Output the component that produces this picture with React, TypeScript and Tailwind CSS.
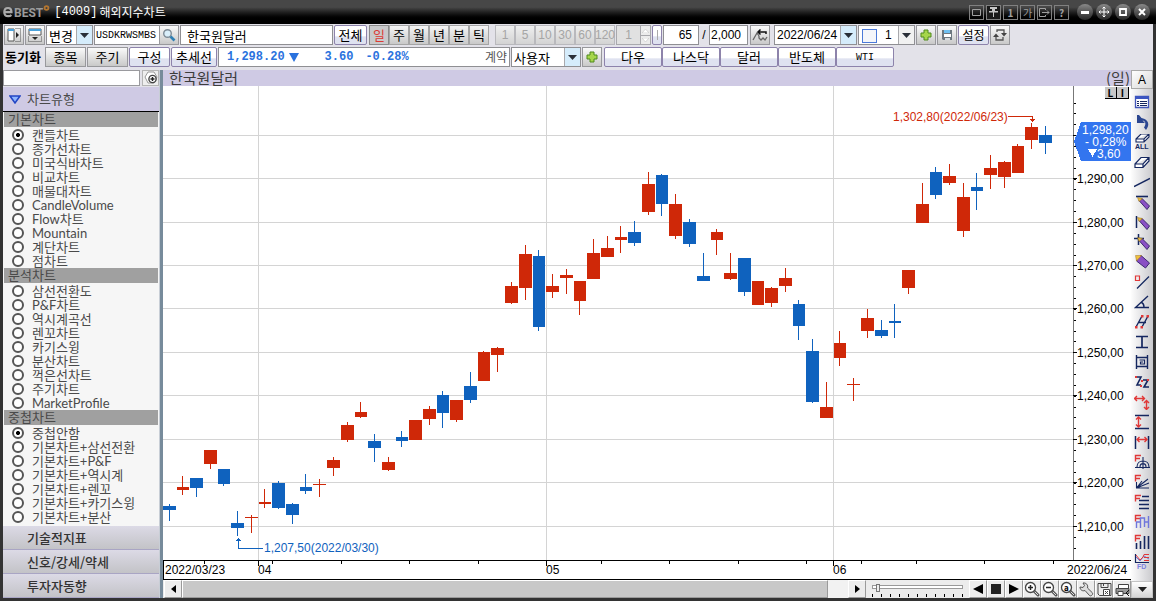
import { useState, type ReactNode } from 'react';
import clsx from 'clsx';

const RED = '#cf2808';
const BLUE = '#0f62be';

// [left, width, wick x, high, low, body top, body bottom, up]
type Candle = [number, number, number, number, number, number, number, 0 | 1];

const candles: Candle[] = [
    [163, 13, 169, 504, 521, 506, 510, 0],
    [177, 12, 182, 476, 495, 487, 490, 1],
    [190, 13, 196, 478, 497, 478, 488, 0],
    [204, 13, 210, 450, 469, 450, 464, 1],
    [218, 12, 223, 469, 486, 469, 484, 0],
    [231, 13, 237, 511, 536, 523, 528, 0],
    [245, 13, 251, 515, 533, 517, 518, 1],
    [259, 12, 264, 489, 508, 502, 504, 1],
    [272, 13, 278, 481, 509, 483, 508, 0],
    [286, 13, 292, 503, 524, 504, 515, 0],
    [300, 12, 305, 474, 494, 487, 491, 0],
    [313, 13, 319, 479, 497, 484, 485, 1],
    [327, 13, 333, 457, 476, 460, 468, 1],
    [341, 13, 347, 422, 442, 425, 440, 1],
    [355, 12, 360, 402, 418, 412, 417, 1],
    [368, 13, 374, 434, 462, 441, 448, 0],
    [382, 13, 388, 457, 471, 462, 470, 1],
    [396, 12, 401, 431, 447, 437, 441, 0],
    [409, 13, 415, 420, 440, 420, 440, 1],
    [423, 13, 429, 406, 425, 409, 419, 1],
    [437, 12, 442, 391, 428, 395, 413, 0],
    [450, 13, 456, 400, 422, 400, 420, 1],
    [464, 13, 470, 372, 403, 386, 400, 0],
    [478, 12, 483, 351, 381, 352, 381, 1],
    [491, 13, 497, 347, 372, 348, 355, 1],
    [505, 13, 511, 282, 304, 286, 303, 1],
    [519, 13, 525, 245, 300, 254, 288, 1],
    [533, 12, 538, 250, 331, 256, 327, 0],
    [546, 13, 552, 274, 298, 286, 292, 1],
    [560, 13, 566, 269, 294, 275, 278, 1],
    [574, 12, 579, 281, 315, 281, 301, 1],
    [587, 13, 593, 239, 279, 253, 279, 1],
    [601, 13, 607, 236, 257, 248, 257, 1],
    [615, 12, 620, 226, 253, 237, 240, 1],
    [628, 13, 634, 221, 246, 232, 243, 0],
    [642, 13, 648, 172, 215, 184, 212, 1],
    [656, 12, 661, 174, 216, 175, 204, 0],
    [669, 13, 675, 194, 239, 204, 236, 1],
    [683, 13, 689, 219, 247, 222, 244, 0],
    [697, 13, 703, 253, 281, 276, 281, 0],
    [711, 12, 716, 229, 255, 232, 240, 1],
    [724, 13, 730, 253, 280, 273, 279, 1],
    [738, 13, 744, 258, 296, 258, 292, 0],
    [752, 12, 757, 281, 305, 281, 305, 1],
    [765, 13, 771, 287, 307, 288, 303, 1],
    [779, 13, 785, 268, 292, 278, 286, 1],
    [793, 12, 798, 300, 340, 304, 326, 0],
    [806, 13, 812, 339, 403, 351, 402, 0],
    [820, 13, 826, 382, 418, 407, 418, 1],
    [834, 12, 839, 331, 366, 343, 358, 1],
    [847, 13, 853, 378, 401, 384, 385, 1],
    [861, 13, 867, 309, 338, 318, 331, 1],
    [875, 13, 881, 320, 338, 330, 336, 0],
    [889, 12, 894, 304, 338, 321, 323, 0],
    [902, 13, 908, 270, 294, 270, 288, 1],
    [916, 13, 922, 183, 223, 204, 223, 1],
    [930, 12, 935, 167, 199, 172, 195, 0],
    [943, 13, 949, 164, 185, 176, 183, 1],
    [957, 13, 963, 183, 237, 197, 231, 1],
    [971, 12, 976, 173, 210, 187, 191, 0],
    [984, 13, 990, 155, 189, 168, 175, 1],
    [998, 13, 1004, 161, 188, 162, 177, 1],
    [1012, 12, 1017, 144, 173, 146, 173, 1],
    [1025, 13, 1031, 123, 149, 127, 140, 1],
    [1039, 13, 1045, 126, 154, 135, 143, 0],
];

const priceLines: [number, string][] = [
    [135, ''],
    [178, '1,290,00'],
    [222, '1,280,00'],
    [265, '1,270,00'],
    [308, '1,260,00'],
    [352, '1,250,00'],
    [395, '1,240,00'],
    [439, '1,230,00'],
    [482, '1,220,00'],
    [526, '1,210,00'],
];

const minorTicks = Array.from({ length: 42 }, (_, i) => Math.round(102.5 + i * 10.86));
const weekTicks = [204, 272, 341, 409, 478, 601, 669, 738, 806, 861, 916, 984, 1053];

const chartGroups = [
    {
        title: '기본차트',
        name: 'basic',
        items: ['캔들차트', '종가선차트', '미국식바차트', '비교차트', '매물대차트', 'CandleVolume', 'Flow차트', 'Mountain', '계단차트', '점차트'],
        selected: '캔들차트',
    },
    {
        title: '분석차트',
        name: 'analysis',
        items: ['삼선전환도', 'P&F차트', '역시계곡선', '렌꼬차트', '카기스윙', '분산차트', '꺽은선차트', '주기차트', 'MarketProfile'],
        selected: '',
    },
    {
        title: '중첩차트',
        name: 'overlay',
        items: ['중첩안함', '기본차트+삼선전환', '기본차트+P&F', '기본차트+역시계', '기본차트+렌꼬', '기본차트+카기스윙', '기본차트+분산'],
        selected: '중첩안함',
    },
];

const box = 'h-5 shrink-0 border border-[#8f8f93] bg-white';
const grayBtn = 'flex h-5 shrink-0 items-center justify-center border border-[#98989c] bg-linear-to-b from-[#fafafa] to-[#c9c9c9] whitespace-nowrap';
const violetBtn = 'flex h-5 shrink-0 items-center justify-center rounded-xs border border-[#8d83ab] bg-linear-to-b from-white from-55% to-[#dfe2f0] to-60% whitespace-nowrap';

function Combo({ label, value, className, blue = true, pad = 'pl-0.5' }: { label: string; value: string; className: string; blue?: boolean; pad?: string }) {
    return (
        <div className={clsx('relative', box, className)}>
            <select aria-label={label} className={clsx('block h-full w-full appearance-none bg-transparent outline-none', pad)}>
                <option>{value}</option>
            </select>
            <span className={clsx('pointer-events-none absolute inset-y-0 right-0 flex w-4 items-center justify-center border-l border-[#a9a9ad]', blue ? 'bg-[#d5ecfb]' : 'bg-[#f1f1f1]')}>
                <svg width="9" height="5" viewBox="0 0 9 5"><path d="M0 0h9L4.500 5z" fill="#2a2f38" /></svg>
            </span>
        </div>
    );
}

function PlusIcon() {
    return (
        <svg width="12" height="12" viewBox="0 0 12 12">
            <path d="M4 1h4v3h3v4H8v3H4V8H1V4h3z" fill="#a6d64a" stroke="#4f8a1c" />
        </svg>
    );
}

function TitleBar() {
    const small = 'flex size-[15px] items-center justify-center border border-[#808080] text-[#a0a0a0]';
    const round = 'flex size-4 items-center justify-center rounded-full bg-linear-to-b from-[#8a8a8a] to-[#262626] text-white';
    return (
        <header className="flex h-6 shrink-0 items-center bg-linear-to-b from-[#474747] from-30% to-black to-85% pr-1.5 pl-0.5">
            <div className="flex items-center font-['Roboto',sans-serif] leading-none font-bold text-[#9b9b9b]">
                <svg width="12" height="12" viewBox="0 0 11 12" fill="none" stroke="#aaa" strokeWidth="2.200">
                    <path d="M2 6.200h7C9 3.400 7.500 2 5.500 2 3.300 2 1.800 3.800 1.800 6.200s1.600 4 3.900 4c1.400 0 2.400-.4 3.200-1.200" />
                </svg>
                <span className="pt-0.5 text-xs">BEST</span>
                <svg className="mb-2" width="7" height="8" viewBox="0 0 8 8"><circle cx="4" cy="4" r="2.200" fill="none" stroke="#b5762f" strokeWidth="2" /></svg>
            </div>
            <h1 className="ml-1 flex items-center gap-0.5 text-xs text-white">
                <span className="font-['Liberation_Mono',monospace]">[4009]</span>
                <span>해외지수차트</span>
            </h1>
            <div className="ml-auto flex gap-0.5">
                <button aria-label="창" className={small}><svg width="9" height="9" viewBox="0 0 9 9"><path d="M.5 1.500h8v6h-8z" fill="none" stroke="currentColor" /></svg></button>
                <button aria-label="고정" className={clsx(small, 'bg-[#1a1a1a] text-[#c4c4c4]')}><svg width="9" height="10" viewBox="0 0 9 10"><path d="M1 0h7v2H6v2h3v1.500H5V10H4V5.500H0V4h3V2H1z" fill="currentColor" /></svg></button>
                <button className={clsx(small, 'text-[10px] font-bold')}>1</button>
                <button className={clsx(small, 'text-[10px]')}>가</button>
                <button aria-label="내보내기" className={small}><svg width="11" height="9" viewBox="0 0 11 9" fill="none" stroke="currentColor"><path d="M6.500 2V.5h-6v8h6V7M3 4.500h7M8 2.500l2 2-2 2" /></svg></button>
                <button className={clsx(small, 'text-[10px] font-bold')}>?</button>
            </div>
            <div className="ml-2 flex gap-[3px]">
                <button aria-label="최소화" className={round}><svg width="8" height="8" viewBox="0 0 8 8"><path d="M0 3h8v3H0z" fill="#fff" /></svg></button>
                <button aria-label="이동" className={round}><svg width="12" height="12" viewBox="0 0 12 12" fill="none" stroke="#fff"><path d="M6 1v10M1 6h10M4.500 2.500L6 1l1.500 1.500M4.500 9.500L6 11l1.500-1.500M2.500 4.500L1 6l1.500 1.500M9.500 4.500L11 6 9.500 7.500" /></svg></button>
                <button aria-label="최대화" className={round}><svg width="8" height="8" viewBox="0 0 8 8"><path d="M1 1h6v6H1z" fill="none" stroke="#fff" strokeWidth="1.800" /></svg></button>
                <button aria-label="닫기" className={round}><svg width="8" height="8" viewBox="0 0 8 8"><path d="M1 1l6 6M7 1L1 7" stroke="#fff" strokeWidth="2" /></svg></button>
            </div>
        </header>
    );
}

function PeriodButtons() {
    const [period, setPeriod] = useState('일');
    return (
        <div className="ml-px flex shrink-0">
            {['일', '주', '월', '년', '분', '틱'].map((p) => (
                <button
                    key={p}
                    onClick={() => setPeriod(p)}
                    className={clsx(
                        'flex h-5 w-5 items-center justify-center border text-[13px]',
                        p === period ? 'border-[#8a8a8a] bg-[#c9c9cb] text-[#dc3a34]' : 'border-[#a5a5a5] bg-linear-to-b from-[#f5f5f5] to-[#c9c9c9]',
                    )}
                >
                    {p}
                </button>
            ))}
        </div>
    );
}

function TopToolbar() {
    const num = "font-['Liberation_Sans','Noto_Sans_CJK_KR',sans-serif] text-xs";
    return (
        <div className="flex h-5 gap-px text-[13px]">
            <button aria-label="왼쪽 패널" className={clsx(grayBtn, 'w-5')}>
                <svg width="14" height="14" viewBox="0 0 14 14"><path d="M1 1h6v12H1z" fill="#fff" stroke="#555" /><path d="M1 1h6v2H1z" fill="#4aa3dc" /><path d="M8.500.5h5v13h-5" fill="none" stroke="#555" strokeDasharray="1 1" /><path d="M9 4l3 3-3 3z" fill="#222" /></svg>
            </button>
            <button aria-label="아래 패널" className={clsx(grayBtn, 'w-5')}>
                <svg width="14" height="14" viewBox="0 0 14 14"><path d="M1 1h12v6H1z" fill="#fff" stroke="#555" /><path d="M1 1h12v2H1z" fill="#4aa3dc" /><path d="M.5 8.500v5h13v-5" fill="none" stroke="#555" strokeDasharray="1 1" /><path d="M4 9h6l-3 3z" fill="#222" /></svg>
            </button>
            <Combo label="변경" value="변경" className="w-[47px]" />
            <div className="flex shrink-0">
                <input aria-label="종목코드" defaultValue="USDKRWSMBS" className={clsx(box, "w-[66px] px-px font-['Liberation_Mono',monospace] text-[10px] outline-none")} />
                <button aria-label="검색" className={clsx(grayBtn, '-ml-px w-5')}>
                    <svg width="14" height="14" viewBox="0 0 14 14"><circle cx="5.500" cy="5.500" r="3.800" fill="#d9eefa" stroke="#7e8b96" strokeWidth="1.400" /><path d="M8.500 8.500L12.500 12.500" stroke="#2f7fb4" strokeWidth="2.600" /></svg>
                </button>
            </div>
            <input aria-label="종목명" defaultValue="한국원달러" className={clsx(box, 'w-[153px] px-1.5 outline-none')} />
            <button className={clsx(violetBtn, 'w-[33px]')}>전체</button>
            <PeriodButtons />
            <div className="ml-[5px] flex shrink-0">
                {['1', '5', '10', '30', '60', '120'].map((n) => (
                    <button key={n} disabled className={clsx('flex h-5 w-5 items-center justify-center border border-[#b9b9bd] bg-linear-to-b from-[#efefef] to-[#d3d3d3] text-[#a5a5a5]', num)}>{n}</button>
                ))}
            </div>
            <div className={clsx('flex w-[35px] shrink-0 border border-[#a9a9ad] bg-[#e1e1e1]', num)}>
                <input aria-label="분 간격" defaultValue="1" disabled className="w-6 border-r border-[#a9a9ad] text-center text-[#a5a5a5]" />
                <span className="flex flex-1 flex-col items-center justify-center gap-0.5 bg-[#ececec]">
                    <svg width="7" height="4" viewBox="0 0 7 4"><path d="M0 4h7L3.500 0z" fill="#fff" stroke="#bbb" strokeWidth=".5" /></svg>
                    <span className="h-px w-full bg-[#a9a9ad]" />
                    <svg width="7" height="4" viewBox="0 0 7 4"><path d="M0 0h7L3.500 4z" fill="#fff" stroke="#bbb" strokeWidth=".5" /></svg>
                </span>
            </div>
            <button className={clsx(violetBtn, 'w-2.5')} aria-label="간격">
                <span className="h-2.5 w-px bg-[#aaa]" />
            </button>
            <input aria-label="봉 개수" defaultValue="65" className={clsx(box, 'w-9 px-1.5 text-right outline-none', num)} />
            <span className={clsx('w-2 text-center leading-5', num)}>/</span>
            <input aria-label="전체 개수" defaultValue="2,000" className={clsx(box, 'w-[39px] px-px outline-none', num)} />
            <button aria-label="되돌리기" className={clsx(grayBtn, 'ml-px w-5')}>
                <svg width="16" height="14" viewBox="0 0 16 14" fill="none"><path d="M1 12l4-7 2 3" stroke="#666" strokeWidth="1.300" /><path d="M6 4h8v2M8.500 1.500L6 4l2.500 2.500" stroke="#111" strokeWidth="1.500" /><path d="M7 8v2l2 2 2-2 2 2 2-3" stroke="#666" strokeWidth="1.300" /></svg>
            </button>
            <Combo label="날짜" value="2022/06/24" className={clsx('ml-[3px] w-[83px]', num)} />
            <div className="relative flex shrink-0">
                <Combo label="선 굵기" value="1" blue={false} pad="pl-[26px]" className={clsx('w-[57px]', num)} />
                <span className="pointer-events-none absolute top-1 left-1 h-3.5 w-[15px] border border-[#4c7ad8] bg-[#f4f6fa]" />
            </div>
            <button aria-label="추가" className={clsx(grayBtn, 'w-5')}><PlusIcon /></button>
            <button aria-label="저장" className={clsx(grayBtn, 'w-5')}>
                <svg width="12" height="12" viewBox="0 0 12 12"><path d="M1 1h10v10H2L1 10z" fill="#6d7880" /><path d="M3 1h6v3H3z" fill="#6fc0f0" /><path d="M3 5h7v3H3z" fill="#fff" /><path d="M4 9h5v2H4z" fill="#d8dde0" /></svg>
            </button>
            <button className={clsx(violetBtn, 'w-[31px] text-xs')}>설정</button>
            <button aria-label="새로고침" className={clsx(grayBtn, 'w-5')}>
                <svg width="14" height="14" viewBox="0 0 14 14" fill="none" stroke="#555" strokeWidth="1.300"><path d="M4 4V2h7v3M10 9v3H3V9" /><path d="M8 5h6l-3 3.500zM0 9h6L3 5.500z" fill="#444" stroke="none" /></svg>
            </button>
        </div>
    );
}

function QuoteToolbar() {
    const quote = "font-['Liberation_Mono',monospace] text-xs font-bold text-[#2a72de]";
    return (
        <div className="flex h-5 gap-px text-[13px]">
            <strong className="w-10 shrink-0 pl-px text-[13px] leading-5 whitespace-nowrap">동기화</strong>
            <button className={clsx(grayBtn, 'w-[41px]')}>종목</button>
            <button className={clsx(grayBtn, 'w-[41px]')}>주기</button>
            <button className={clsx(violetBtn, 'w-[41px]')}>구성</button>
            <button className={clsx(violetBtn, 'w-[46px]')}>추세선</button>
            <div className={clsx(box, 'flex w-[292px] items-center pr-0.5 pl-2', quote)}>
                <span>1,298.20</span>
                <svg className="ml-1" width="10" height="9" viewBox="0 0 10 9"><path d="M0 0h10L5 9z" fill="#2a72de" /></svg>
                <span className="ml-[26px]">3.60</span>
                <span className="ml-3">-0.28%</span>
                <span className="ml-auto font-['Noto_Sans_CJK_KR',sans-serif] font-normal text-[#555]">계약</span>
            </div>
            <Combo label="사용자" value="사용자" className="w-[70px]" />
            <button aria-label="추가" className={clsx(grayBtn, 'w-5')}><PlusIcon /></button>
            <div className="ml-px flex">
                {['다우', '나스닥', '달러', '반도체', 'WTI'].map((name) => (
                    <button key={name} className={clsx(violetBtn, 'w-[58px]', name === 'WTI' && "font-['Liberation_Mono',monospace] text-[10px]")}>{name}</button>
                ))}
            </div>
        </div>
    );
}

function Sidebar() {
    return (
        <aside className="flex w-[156px] shrink-0 flex-col overflow-hidden bg-[#f6f6f6] text-[#4a4a4a]">
            <div className="flex h-[17px] shrink-0 justify-between bg-[#e3e2e9] pb-px">
                <input aria-label="차트 검색" className="w-[137px] border border-[#9a9a9e] bg-white outline-none" />
                <button aria-label="검색 설정" className="flex w-[17px] items-center justify-center border border-[#b5b5b5] bg-[#eee]">
                    <svg width="14" height="14" viewBox="0 0 14 14"><path d="M4 1h6l3 5-3 6H4L1 6z" fill="#fff" stroke="#999" /><circle cx="8.500" cy="8" r="3.600" fill="#fff" stroke="#444" strokeWidth="1.400" /><path d="M6.500 8h4M8.500 6v4" stroke="#222" strokeWidth="1.400" /></svg>
                </button>
            </div>
            <button className="flex h-[25px] shrink-0 items-center gap-1.5 border-b border-black bg-[#cfcae4] pl-1.5 text-[13px]">
                <svg width="12" height="9" viewBox="0 0 12 9"><path d="M1 1h10L6 8z" fill="#8fb6ff" stroke="#2346c4" strokeWidth="1.500" /></svg>
                차트유형
            </button>
            <div className="min-h-0 flex-1 px-px font-['Lato','Noto_Sans_CJK_KR',sans-serif]">
                {chartGroups.map((group) => (
                    <fieldset key={group.name} className="text-[13px]">
                        <legend className="mb-px h-[15px] w-full bg-[#a0a0a0] pl-1 leading-[15px]">{group.title}</legend>
                        {group.items.map((item) => (
                            <label key={item} className="flex h-3.5 items-center gap-2 pl-2 leading-3.5 whitespace-nowrap">
                                <input
                                    type="radio"
                                    name={group.name}
                                    defaultChecked={item === group.selected}
                                    className="size-3 shrink-0 appearance-none rounded-full border-2 border-[#555] bg-white checked:bg-radial checked:from-black checked:from-30% checked:to-white checked:to-40%"
                                />
                                {item}
                            </label>
                        ))}
                    </fieldset>
                ))}
            </div>
            <nav className="shrink-0">
                {['기술적지표', '신호/강세/약세', '투자자동향'].map((name) => (
                    <button key={name} className="block h-6 w-full border-b border-[#a9a5c4] bg-linear-to-b from-[#dcdae6] to-[#c3c3c7] pl-6 text-left text-[13px] leading-5 font-medium text-[#333]">{name}</button>
                ))}
            </nav>
        </aside>
    );
}

function CandleChart() {
    return (
        <svg className="block h-full w-full font-['Liberation_Sans',sans-serif]" viewBox="163 86 968 494" preserveAspectRatio="xMinYMin meet" fontSize="12" shapeRendering="crispEdges">
            <rect x="163" y="86" width="968" height="494" fill="#fff" />
            {priceLines.map(([y]) => <rect key={y} x="163" y={y} width="910" height="1" fill="#d4d4d4" />)}
            {[258, 546, 833].map((x) => <rect key={x} x={x} y="86" width="1" height="474" fill="#d4d4d4" />)}
            <rect x="1073" y="86" width="1" height="474" fill="#777" />
            {minorTicks.map((y) => <rect key={y} x="1074" y={y} width="2" height="1" fill="#000" />)}
            {priceLines.map(([y, label]) => (
                <g key={y}>
                    <rect x="1073" y={y} width="4" height="1" fill="#000" />
                    <text x="1077" y={y + 5} fill="#000">{label}</text>
                </g>
            ))}
            {candles.map(([x, w, wick, high, low, top, bottom, up]) => (
                <g key={x} fill={up ? RED : BLUE}>
                    <rect x={wick} y={high} width="1" height={low - high} />
                    <rect x={x} y={top} width={w} height={bottom - top} />
                </g>
            ))}
            {/* high / low markers */}
            <text x="893" y="121" fill={RED}>1,302,80(2022/06/23)</text>
            <path d="M1008 116.500h24.500v5" fill="none" stroke={RED} />
            <path d="M1030 119h5v1h-1v1h-1v1h-1v-1h-1v-1h-1z" fill={RED} />
            <text x="264" y="552" fill={BLUE}>1,207,50(2022/03/30)</text>
            <path d="M263 548.500h-24.500v-9" fill="none" stroke={BLUE} />
            <path d="M236 541h5v-1h-1v-1h-1v-1h-1v1h-1v1h-1z" fill={BLUE} />
            {/* last price */}
            <path d="M1081 122h50v39h-50l-7-19.500z" fill="#3375ef" />
            <g fill="#fff">
                <text x="1082" y="134">1,298,20</text>
                <text x="1085" y="146">- 0,28%</text>
                <path d="M1088 149h9l-4.500 8z" />
                <text x="1097" y="158">3,60</text>
            </g>
            {/* date axis */}
            <rect x="163" y="560" width="968" height="1" fill="#000" />
            <rect x="163" y="579" width="968" height="1" fill="#000" />
            <rect x="163" y="560" width="1" height="20" fill="#000" />
            {weekTicks.map((x) => <rect key={x} x={x} y="561" width="1" height="3" fill="#000" />)}
            {[258, 546, 833].map((x, i) => (
                <g key={x}>
                    <rect x={x} y="561" width="1" height="5" fill="#000" />
                    <text x={x} y="574">{['04', '05', '06'][i]}</text>
                </g>
            ))}
            <text x="165" y="574">2022/03/23</text>
            <text x="1067" y="574">2022/06/24</text>
        </svg>
    );
}

const ctl = 'flex w-[18px] shrink-0 items-center justify-center border border-[#9a9a9a] border-t-white border-l-white bg-[#ececec]';

function Lens({ children }: { children: ReactNode }) {
    return (
        <svg width="16" height="16" viewBox="0 0 16 16">
            <path d="M10 10l4 4" stroke="#555" strokeWidth="3" strokeLinecap="round" />
            <path d="M10.500 10.500l3.500 3.500" stroke="#ddd" strokeWidth="1" />
            <circle cx="6.500" cy="6.500" r="5" fill="#fff" stroke="#444" strokeWidth="1.300" />
            {children}
        </svg>
    );
}

function BottomBar() {
    return (
        <div className="flex h-[18px] shrink-0 bg-[#ececec]">
            <button aria-label="이전" className={clsx(ctl, 'ml-px')}><svg width="5" height="8" viewBox="0 0 5 8"><path d="M5 0v8L0 4z" /></svg></button>
            <div className="flex flex-1 bg-[#f2f2f2]">
                <div className="w-[97%] border border-[#9a9a9a] border-t-white border-l-white bg-[#c8c8c8]" />
            </div>
            <button aria-label="다음" className={ctl}><svg width="5" height="8" viewBox="0 0 5 8"><path d="M0 0v8l5-4z" /></svg></button>
            <div className="flex w-[103px] shrink-0 flex-col px-1.5 pt-0.5">
                <input
                    type="range"
                    aria-label="확대 비율"
                    min="0"
                    max="100"
                    defaultValue="4"
                    className="block h-2.5 w-full appearance-none bg-transparent [&::-webkit-slider-runnable-track]:h-1 [&::-webkit-slider-runnable-track]:border [&::-webkit-slider-runnable-track]:border-[#999] [&::-webkit-slider-runnable-track]:bg-white [&::-webkit-slider-thumb]:-mt-0.5 [&::-webkit-slider-thumb]:h-2 [&::-webkit-slider-thumb]:w-1 [&::-webkit-slider-thumb]:appearance-none [&::-webkit-slider-thumb]:border [&::-webkit-slider-thumb]:border-[#777] [&::-webkit-slider-thumb]:bg-[#eee]"
                />
                <svg className="mt-0.5 w-full" height="3" viewBox="0 0 91 3" shapeRendering="crispEdges">
                    {Array.from({ length: 11 }, (_, i) => <rect key={i} x={i * 9} y="0" width="1" height="3" />)}
                </svg>
            </div>
            <button aria-label="뒤로" className={ctl}><svg width="10" height="10" viewBox="0 0 10 10"><path d="M10 0v10L0 5z" /></svg></button>
            <button aria-label="정지" className={ctl}><svg width="10" height="10" viewBox="0 0 10 10"><path d="M0 0h10v10H0z" fill="#222" /></svg></button>
            <button aria-label="앞으로" className={ctl}><svg width="10" height="10" viewBox="0 0 10 10"><path d="M0 0v10l10-5z" /></svg></button>
            <button aria-label="확대" className={ctl}><Lens><path d="M4 6.500h5M6.500 4v5" stroke="#222" strokeWidth="1.500" /></Lens></button>
            <button aria-label="축소" className={ctl}><Lens><path d="M4 6.500h5" stroke="#222" strokeWidth="1.500" /></Lens></button>
            <button aria-label="전체보기" className={ctl}><Lens><text x="4" y="9.500" fontSize="8" fontWeight="bold">a</text></Lens></button>
            <button aria-label="도구" className={ctl}>
                <svg width="15" height="15" viewBox="0 0 15 15"><path d="M4 1l1.500 2.500L4 5.500 1 5C1 8 3.500 9.500 6 8.500l4.500 5c1.500 1.200 4-1 2.800-2.800L8.500 6C9.500 3 7 .5 4 1z" fill="#ddd" stroke="#555" /></svg>
            </button>
            <button aria-label="저장" className={ctl}>
                <svg width="15" height="15" viewBox="0 0 15 15" fill="none" stroke="#444"><path d="M1 1.500h13v12H2.500L1 12zM4 1.500v4h7v-4M6.500 2v2" /><path d="M6.500 7.500h6v6h-6z" fill="#fff" /><path d="M8 9l3 3M11 9l-3 3" /></svg>
            </button>
            <button aria-label="인쇄" className={ctl}>
                <svg width="15" height="15" viewBox="0 0 15 15" fill="none" stroke="#444"><path d="M3.500 6V2.500h10V6" fill="#fff" /><path d="M1 6.500h13v5H1z" fill="#999" /><path d="M3 9.500h5v4H3z" fill="#fff" /><path d="M14 8l-3 3 3 3" stroke="#111" /></svg>
            </button>
        </div>
    );
}

const N = '#14265f';
const R = '#e03838';

function Pencil() {
    return (
        <>
            <path d="M5 6.500L8 4.500l7.500 7.500-2.500 3.500z" fill="#8a4fc4" stroke="#3c2a70" />
            <path d="M3.500 3.500l5 1L5 7.500z" fill="#f0c040" stroke="#8a6a20" strokeWidth=".5" />
        </>
    );
}

function Eraser() {
    return <path d="M1 10l6-6.500h8v3.500l-6 6.500H1zM1 10h8l6-6.500M9 10v3.500" fill="#fff" stroke={N} strokeWidth="1.200" />;
}

const F = <path d="M1.500 7.500V1.500H7M1.500 4.500H6" stroke={R} strokeWidth="1.400" />;

const drawingTools: [string, ReactNode][] = [
    ['목록', <><path d="M1.500 2.500h13v11h-13z" fill="#fff" stroke="#4256b8" strokeWidth="1.300" /><path d="M1 2h14v3H1z" fill="#3c55c0" /><path d="M3 7.500h2M3 9.500h2M3 11.500h2M6 7.500h7M6 9.500h7M6 11.500h7" stroke={N} /></>],
    ['실행취소', <path d="M3 1v8h8L8.500 6.500c3 .5 4 3.500 1.500 7l2 2.500c4-5 3-10.500-4.500-12L5 1z" fill="#2b4690" />],
    ['전체 지우기', <><path d="M2 5l5-5h8v3L10 8H2zM2 5h8l5-5M10 5v3" fill="#fff" stroke={N} strokeWidth="1.100" /><text x="1" y="15" fontSize="7" fontWeight="bold" stroke="none" fill={N}>ALL</text></>],
    ['지우기', <Eraser />],
    ['추세선', <path d="M0 12.500L16 4.500" stroke={N} strokeWidth="1.400" />],
    ['수평선', <><path d="M2 2.500h12" stroke={N} strokeWidth="1.600" /><Pencil /></>],
    ['수직선', <><path d="M2.500 2v12" stroke={N} strokeWidth="1.500" /><Pencil /></>],
    ['십자선', <><path d="M0 4.500h10M4.500 0v11" stroke={N} strokeWidth="1.500" /><Pencil /></>],
    ['연필', <><path d="M4 3.500L7 1.500l8.500 7.500L11.500 14 2.500 7z" fill="#8a4fc4" stroke="#3c2a70" /><path d="M1.500 1.500h6L2.500 7z" fill="#f0c040" stroke="#a07820" strokeWidth=".5" /></>],
    ['직선', <><path d="M3 14.500L15 2.500" stroke={N} strokeWidth="1.300" /><path d="M1.500 2h4v4.500h-4z" stroke={R} strokeWidth="1.200" /></>],
    ['각도선', <path d="M14 2L1.500 13.500H15M7 8c2 1 3 3 3 5" stroke={N} strokeWidth="1.400" />],
    ['평행선', <><path d="M2 13L8 2M8 13l6-11M4 8.500h8" stroke={N} strokeWidth="1.400" /><path d="M1 12h2.500v2.500H1zM6.500 12H9v2.500H6.500zM7 1h2.500v2.500H7zM12.500 1H15v2.500h-2.500z" fill={R} /></>],
    ['구간선', <path d="M2 2.500h12M2 13.500h12M8 3v10" stroke={N} strokeWidth="1.700" />],
    ['사각형', <><path d="M2.500 1v14M13.500 1v14M2.500 3.500h11M2.500 12.500h11" stroke={N} strokeWidth="1.400" /><path d="M5.500 6h5v4h-4V8H9" stroke={N} strokeWidth="1.200" /></>],
    ['지그재그', <><path d="M2 3h5l-4 8h4M9 6h5l-4 7h5" stroke={N} strokeWidth="1.600" /><path d="M1 2h2v2H1zM7 6h2v2H7zM6 11h2v2H6zM13 5h2v2h-2z" fill={R} /></>],
    ['가로세로', <path d="M1 4.500h9M3 2L.5 4.500 3 7M8 2l2.500 2.500L8 7M12.500 7v8M10 9l2.500-2.500L15 9M10 13l2.500 2.500L15 13" stroke={R} strokeWidth="1.400" />],
    ['세로범위', <><path d="M1 1.500h14M1 14.500h14" stroke={N} strokeWidth="1.500" /><path d="M4.500 3v10M2 5.500L4.500 3 7 5.500M2 10.500L4.500 13 7 10.500" stroke={R} strokeWidth="1.400" /></>],
    ['가로범위', <><path d="M1.500 2v13M14.500 2v13" stroke={N} strokeWidth="1.500" /><path d="M3 5.500h10M5.500 3L3 5.500 5.500 8M10.500 3L13 5.500 10.500 8" stroke={R} strokeWidth="1.400" /></>],
    ['피보나치 원', <>{F}<path d="M9 3v12M3 13c0-8 12-8 12 0M6 13c0-4.500 6-4.500 6 0M1 13.500h15" stroke={N} strokeWidth="1.100" /></>],
    ['피보나치 팬', <>{F}<path d="M2.500 14L8 7M2.500 14L14 5M2.500 14L15 9M2 14h13M2.500 8v6" stroke={N} strokeWidth="1.100" /></>],
    ['피보나치 되돌림', <>{F}<path d="M8 2.500h7M5 6.500h10M5 10.500h10M5 14.500h10" stroke={N} strokeWidth="1.600" /></>],
    ['피보나치 확장', <>{F}<path d="M2.500 14V8h4v6M6.500 11V4h4v9M10.500 8h4M14.500 2v12" stroke="#6f76dc" strokeWidth="1.400" /></>],
    ['피보나치 시간', <>{F}<path d="M2.500 9v6M6.500 7v8M10.500 2v13M14.500 2v13" stroke={N} strokeWidth="1.600" /></>],
    ['FD', <><path d="M1.500 0v8.500H15" stroke={N} strokeWidth="1.200" /><path d="M2 3l4 4 4-5 5 3" stroke="#6f76dc" /><path d="M2 1l4 5 3-3 1-2.500h5M10 3.500h5M10 6.500h5" stroke={R} /><text x="3" y="15" fontSize="7" fontWeight="bold" stroke="none" fill="#7c82e0">FD</text></>],
];

function DrawingToolbar() {
    return (
        <aside className="flex w-[22px] shrink-0 flex-col bg-linear-to-r from-[#fdfdfd] to-[#c9c9cd] font-['Liberation_Sans',sans-serif]">
            <button className="mb-[3px] h-[19px] shrink-0 border border-[#a9a9a9] bg-linear-to-br from-white to-[#d8d8d8] text-xs leading-none">A</button>
            {drawingTools.map(([label, icon]) => (
                <button key={label} aria-label={label} className="flex h-5 shrink-0 items-center justify-center">
                    <svg width="16" height="16" viewBox="0 0 16 16" fill="none">{icon}</svg>
                </button>
            ))}
            <button aria-label="더보기" className="mt-auto flex h-[17px] shrink-0 items-center justify-center border border-[#c4c4c4] bg-linear-to-b from-white to-[#d6d6d6]">
                <svg width="9" height="5" viewBox="0 0 9 5"><path d="M0 0h9L4.500 5z" fill="#222" /></svg>
            </button>
        </aside>
    );
}

export default function App() {
    const mini = 'h-3 w-3 border-r border-b border-black bg-[#c8c8c8] text-[10px] leading-none font-bold';
    return (
        <div className="flex h-screen w-full flex-col overflow-hidden bg-[#333] font-['Noto_Sans_CJK_KR',sans-serif] text-black">
            <TitleBar />
            <div className="mx-[3px] mb-[3px] flex min-h-0 flex-1 flex-col bg-[#e3e2e9]">
                <div className="flex shrink-0 flex-col gap-0.5 overflow-hidden px-px pt-px pb-[3px]">
                    <TopToolbar />
                    <QuoteToolbar />
                </div>
                <div className="flex min-h-0 flex-1">
                    <Sidebar />
                    <div className="w-1 shrink-0 border-l border-[#c8ced6] bg-[#778b9b]" />
                    <main className="flex min-w-0 flex-1 flex-col">
                        <div className="flex h-4 shrink-0 items-center justify-between bg-[#cfcae4] pr-px pl-1.5 text-[15px] leading-4 text-[#3d3d3d]">
                            <h2>한국원달러</h2>
                            <span>(일)</span>
                        </div>
                        <div className="relative min-h-0 flex-1">
                            <CandleChart />
                            <div className="absolute top-px right-0.5 flex">
                                <button className={mini}>L</button>
                                <button className={mini}>I</button>
                            </div>
                        </div>
                        <BottomBar />
                    </main>
                    <DrawingToolbar />
                </div>
            </div>
        </div>
    );
}
